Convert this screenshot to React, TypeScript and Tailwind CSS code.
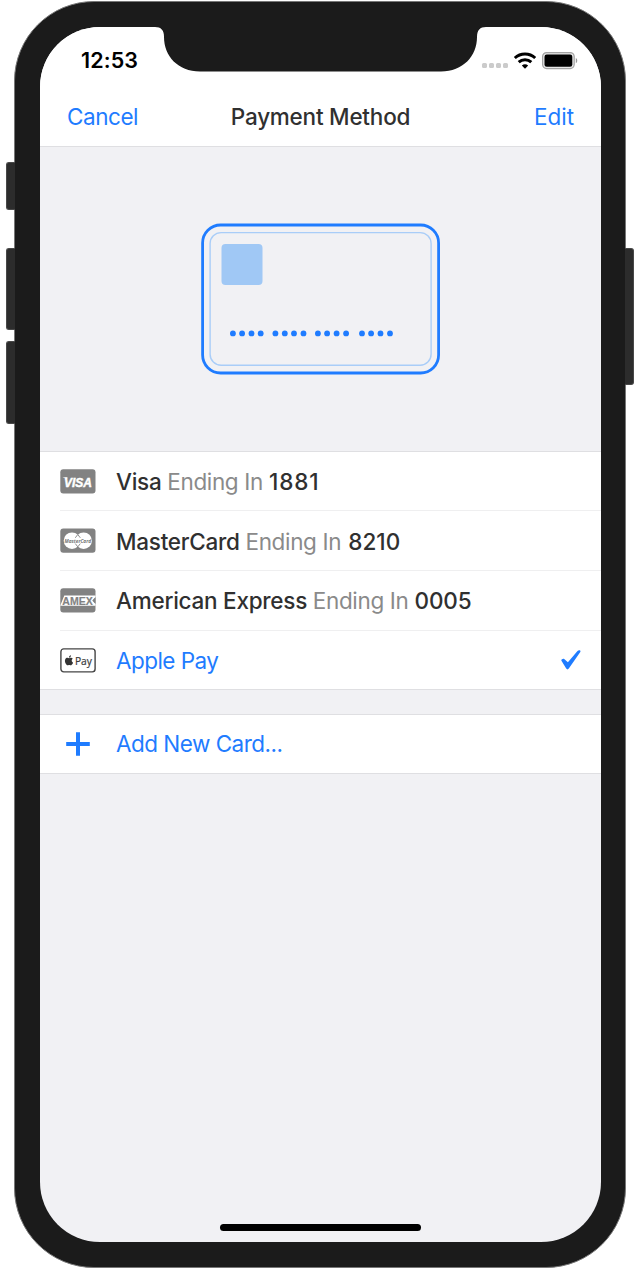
import type { ReactNode } from "react";

function Notch() {
  return (
    <svg className="absolute left-[114px] top-[-1px]" width="334" height="46" viewBox="0 0 334 46">
      <path
        fill="#1b1b1b"
        d="M0 0V1H1C7 1 10 4 10 11C10 30 24 45.500 46 45.500H287C309 45.500 323 30 323 11C323 4 326 1 332 1H334V0Z"
      />
    </svg>
  );
}

function WifiIcon() {
  return (
    <svg width="24" height="18" viewBox="0 0 24 18" fill="none" stroke="#000" strokeWidth="3">
      <path d="M1.800 6A15 15 0 0 1 22.200 6" />
      <path d="M5.700 10.200A9.200 9.200 0 0 1 18.300 10.200" />
      <path fill="#000" stroke="none" d="M12 16.700L8.800 13.500A5 5 0 0 1 15.200 13.500Z" />
    </svg>
  );
}

function BatteryIcon() {
  return (
    <svg width="37" height="18" viewBox="0 0 37 18">
      <rect x="0.600" y="0.600" width="31.600" height="16" rx="4" fill="#e6e6e6" stroke="#a3a3a3" strokeWidth="1.200" />
      <rect x="2.500" y="2.500" width="27.800" height="12.200" rx="2.200" fill="#000" />
      <path d="M33.800 6C35.700 6.800 35.700 10.400 33.800 11.200Z" fill="#999" />
    </svg>
  );
}

function VisaIcon() {
  return (
    <svg width="36" height="25" viewBox="0 0 36 25">
      <rect x="0.300" y="0.300" width="35.200" height="24.200" rx="3" fill="#828282" />
      <path d="M2.800 8.200H7.500L7 10.200C5.800 9.200 4.400 8.700 2.800 8.500Z" fill="#fff" />
      <text x="4" y="17.700" textLength="28" lengthAdjust="spacingAndGlyphs" fill="#fff" stroke="#fff" strokeWidth="0.500" fontFamily="Liberation Sans, sans-serif" fontWeight="700" fontStyle="italic" fontSize="13.300">
        VISA
      </text>
    </svg>
  );
}

function MasterCardIcon() {
  return (
    <svg width="36" height="25" viewBox="0 0 36 25">
      <rect x="0.300" y="0.600" width="35.200" height="24.200" rx="3" fill="#828282" />
      <circle cx="12" cy="12.700" r="8.300" fill="#fff" />
      <circle cx="23.600" cy="12.700" r="8.300" fill="#fff" />
      <path d="M15.300 9.800L17.800 6.500L20.300 9.800M15.300 15.600L17.800 18.900L20.300 15.600" fill="none" stroke="#828282" strokeWidth="0.900" />
      <text x="4.500" y="14.500" textLength="26.500" lengthAdjust="spacingAndGlyphs" fill="#777" fontFamily="Open Sans, sans-serif" fontWeight="700" fontStyle="italic" fontSize="5.600">
        MasterCard
      </text>
    </svg>
  );
}

function AmexIcon() {
  return (
    <svg width="36" height="25" viewBox="0 0 36 25">
      <rect x="0.300" y="0.300" width="35.200" height="24.200" rx="3" fill="#828282" />
      <path fill="#fff" d="M0.300 17.500L4.300 7.400H35.500V9L32.300 12.500L35.500 16V17.800H0.300Z" />
      <text x="2.300" y="16.600" textLength="30.500" lengthAdjust="spacingAndGlyphs" fill="#828282" stroke="#828282" strokeWidth="0.200" fontFamily="Liberation Sans, sans-serif" fontWeight="700" fontSize="11.500">
        AMEX
      </text>
      <path d="M35.500 9.200L32.900 12.500L35.500 15.800Z" fill="#828282" />
    </svg>
  );
}

function ApplePayIcon() {
  return (
    <svg width="36" height="25" viewBox="0 0 36 25">
      <rect x="0.900" y="0.900" width="34.200" height="23" rx="2.800" fill="#fff" stroke="#454545" strokeWidth="1.400" />
      <g transform="translate(3 6.300) scale(0.500)" fill="#333">
        <path d="M18.710 19.500c-.83 1.240-1.710 2.450-3.050 2.470-1.340.03-1.770-.79-3.290-.79-1.530 0-2 .77-3.270.82-1.310.05-2.300-1.320-3.140-2.530C4.250 17 2.940 12.450 4.700 9.390c.87-1.520 2.430-2.480 4.120-2.510 1.280-.02 2.500.87 3.290.87.780 0 2.260-1.070 3.810-.91.650.03 2.470.26 3.640 1.980-.09.06-2.170 1.280-2.150 3.810.03 3.020 2.650 4.030 2.680 4.040-.03.07-.42 1.440-1.380 2.830M13 3.500c.73-.83 1.940-1.460 2.940-1.500.13 1.170-.34 2.350-1.040 3.190-.69.850-1.830 1.510-2.950 1.420-.15-1.150.41-2.350 1.050-3.110z" />
      </g>
      <text x="14.900" y="16.600" textLength="17" lengthAdjust="spacingAndGlyphs" fill="#3a3a3a" stroke="#3a3a3a" strokeWidth="0.200" fontFamily="Open Sans, sans-serif" fontSize="11.500">
        Pay
      </text>
    </svg>
  );
}

function PlusIcon() {
  return (
    <svg width="36" height="25" viewBox="0 0 36 25" stroke="#1f7cff" strokeWidth="4">
      <path d="M6.200 12H29.800M18 0.200V23.800" />
    </svg>
  );
}

function CheckIcon() {
  return (
    <svg width="20" height="20" viewBox="0 0 20 20" fill="#1f7cff">
      <path d="M0.300 10.500C0.200 9.200 2.200 8.200 3.200 8.900L6.900 12.200L16.500 1C17.700 -0.200 20.200 0.200 19.300 1.900L7.800 18.600C7.100 19.700 5.900 19.700 5.200 18.600Z" />
    </svg>
  );
}

function CardArt() {
  const dots = [9.800, 19, 28.400, 37.600, 52.300, 61.700, 70.900, 80.400, 94.800, 104, 113.500, 123, 138.900, 148, 157.400, 166.900];
  return (
    <svg width="240" height="152" viewBox="1 0 240 152">
      <rect x="2.600" y="2" width="236" height="148" rx="18" fill="none" stroke="#1f7cff" strokeWidth="2.800" />
      <rect x="10.100" y="9.600" width="221" height="132.600" rx="11" fill="none" stroke="#a9cdf8" strokeWidth="1.400" />
      <rect x="21.500" y="21" width="41" height="41" rx="4" fill="#a0c8f5" />
      {dots.map((x) => (
        <circle key={x} cx={x + 23.100} cy="110.400" r="2.900" fill="#1f7cff" />
      ))}
    </svg>
  );
}

function Row({ icon, height, last, pad = "pt-px", children }: { icon: ReactNode; height: string; last?: boolean; pad?: string; children: ReactNode }) {
  return (
    <div className={`flex pl-5 ${height}`}>
      <div className={`flex flex-1 items-center ${last ? "" : "border-b border-[#efeff0]"}`}>
        <div className="w-[56px] shrink-0">{icon}</div>
        <div className={`flex flex-1 items-center justify-between ${pad}`}>{children}</div>
      </div>
    </div>
  );
}

function Saved({ brand, digits, tracking }: { brand: string; digits: string; tracking: string }) {
  return (
    <p className="whitespace-pre font-medium text-[#303030]">
      <span className="tracking-[-0.250px]">{brand} </span>
      <span className="font-normal tracking-[-0.350px] text-[#8a8a8a]">Ending In </span>
      <span className={tracking}>{digits}</span>
    </p>
  );
}

export default function App() {
  return (
    <div className="h-[1288px] w-[640px] overflow-hidden bg-white pl-[14px] pt-px font-['Inter','Liberation_Sans',sans-serif] text-[22.500px] leading-7">
      <div className="relative h-[1267px] w-[612px] rounded-[80px] border border-[#777] bg-[#1b1b1b] pl-[25px] pt-[25px]">
        <div className="absolute left-[-9px] top-[160px] h-[48px] w-[9px] rounded-l-[3px] border border-r-0 border-[#484848] bg-[#2c2c2c]" />
        <div className="absolute left-[-9px] top-[246px] h-[82px] w-[9px] rounded-l-[3px] border border-r-0 border-[#484848] bg-[#2c2c2c]" />
        <div className="absolute left-[-9px] top-[339px] h-[83px] w-[9px] rounded-l-[3px] border border-r-0 border-[#484848] bg-[#2c2c2c]" />
        <div className="absolute right-[-9px] top-[246px] h-[137px] w-[9px] rounded-r-[3px] border border-l-0 border-[#484848] bg-[#2c2c2c]" />

        <div className="relative flex h-[1215px] w-[561px] flex-col overflow-hidden rounded-[60px] bg-[#f1f1f4]">
          <Notch />
          <header className="h-[120px] shrink-0 border-b border-[#dfdfe2] bg-white">
            <div className="flex h-[60px] items-start justify-between pl-[41px] pr-[22px] pt-[20px]">
              <span className="text-[21.500px] font-semibold leading-[27px] tracking-[0.100px] text-black">12:53</span>
              <div className="flex items-start pt-[5px]">
                <div className="flex gap-[2px] pt-[11px]">
                  <i className="size-[5px] rounded-[1.500px] bg-[#cbcbcb]" />
                  <i className="size-[5px] rounded-[1.500px] bg-[#cbcbcb]" />
                  <i className="size-[5px] rounded-[1.500px] bg-[#cbcbcb]" />
                  <i className="size-[5px] rounded-[1.500px] bg-[#cbcbcb]" />
                </div>
                <div className="ml-[5px]"><WifiIcon /></div>
                <div className="ml-[5px]"><BatteryIcon /></div>
              </div>
            </div>
            <div className="grid h-[60px] grid-cols-[1fr_auto_1fr] items-center px-[27px]">
              <button className="text-left tracking-[-0.450px] text-[#1f7cff]">Cancel</button>
              <h1 className="whitespace-nowrap text-center font-medium tracking-[-0.230px] text-[#303030]">Payment Method</h1>
              <button className="text-right text-[#1f7cff]">Edit</button>
            </div>
          </header>

          <div className="flex h-[304px] shrink-0 items-center justify-center">
            <CardArt />
          </div>

          <section className="border-y border-[#dfdfe2] bg-white">
            <Row icon={<VisaIcon />} height="h-[59px]">
              <Saved brand="Visa" digits="1881" tracking="tracking-[0.900px]" />
            </Row>
            <Row icon={<MasterCardIcon />} height="h-[60px]" pad="pt-[2px]">
              <Saved brand="MasterCard" digits="8210" tracking="ml-px tracking-[0.100px]" />
            </Row>
            <Row icon={<AmexIcon />} height="h-[60px]">
              <Saved brand="American Express" digits="0005" tracking="tracking-[-0.100px]" />
            </Row>
            <Row icon={<ApplePayIcon />} height="h-[58px]" last>
              <span className="tracking-[-0.550px] text-[#1f7cff]">Apple Pay</span>
              <div className="mb-px mr-5"><CheckIcon /></div>
            </Row>
          </section>

          <section className="mt-6 border-y border-[#dfdfe2] bg-white">
            <Row icon={<PlusIcon />} height="h-[58px]" last pad="pt-0">
              <span className="tracking-[-0.520px] text-[#1f7cff]">Add New Card...</span>
            </Row>
          </section>

          <div className="mx-auto mb-[11px] mt-auto h-[7px] w-[201px] rounded-full bg-black" />
        </div>
      </div>
    </div>
  );
}
